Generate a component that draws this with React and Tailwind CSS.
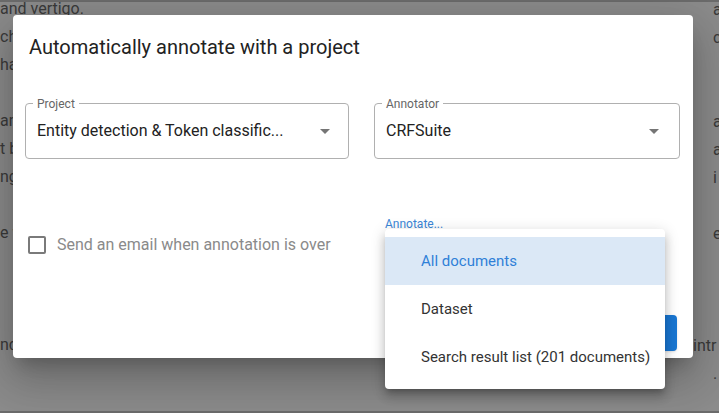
import React from 'react';

const font = { fontFamily: 'Roboto, "Liberation Sans", sans-serif' };

function Caret({ className }) {
    return (
        <svg viewBox="0 0 24 24" className={className} fill="currentColor">
            <path d="M7 10l5 5 5-5z" />
        </svg>
    );
}

function OutlinedSelect({ label, value, width, caretRight }) {
    return (
        <div className={`relative h-[56px] rounded-[4px] border border-[#b0b0b0] ${width}`}>
            <span className="absolute -top-[8px] left-[7px] bg-white px-1 text-[12px] leading-4 text-[#666]">{label}</span>
            <div className="flex h-full items-center pl-[11px] pr-10 text-[16px] text-[#222] whitespace-nowrap overflow-hidden">
                {value}
            </div>
            <Caret className={`absolute top-[15px] h-6 w-6 text-[#757575] ${caretRight}`} />
        </div>
    );
}

export default function App() {
    const leftLines = ['and vertigo.', 'ch', 'ha', '', 'an', 't b', 'ng', '', 'e v', '', '', '', 'nd', ''];
    const rightLines = ['a', 'c', '', '', 'a', 'a', 'i', '', 'e', '', '', '', 'intr', '.'];

    return (
        <div className="relative h-[413px] w-full overflow-hidden bg-[#8b8b8b]" style={font}>
            {/* page behind the modal */}
            <div className="flex h-full justify-between border-t-2 border-b-2 border-[#6b6b6b] text-[16px] text-[#3a3a3a]">
                <div className="-mt-[7px] flex flex-col leading-[28px] whitespace-nowrap">
                    {leftLines.map((l, i) => (
                        <div key={i} className="h-[28px]">{l}</div>
                    ))}
                </div>
                <div className="-mt-[6px] w-[6px] flex flex-col leading-[28px] whitespace-nowrap">
                    {rightLines.map((l, i) => (
                        <div key={i} className={`h-[28px] ${l === 'intr' ? '-ml-[20px]' : ''}`}>{l}</div>
                    ))}
                </div>
            </div>

            {/* dialog */}
            <div className="absolute left-[13px] top-[15px] flex h-[343px] w-[680px] flex-col rounded-[4px] bg-white shadow-[0px_11px_15px_-7px_rgba(0,0,0,0.2),0px_24px_38px_3px_rgba(0,0,0,0.14),0px_9px_46px_8px_rgba(0,0,0,0.12)]">
                <h2 className="px-4 pt-4 text-[20px] leading-8 text-[#222]">Automatically annotate with a project</h2>

                <div className="flex gap-[25px] px-3 pt-10">
                    <OutlinedSelect label="Project" value="Entity detection & Token classific..." width="w-[324px]" caretRight="right-[11px]" />
                    <OutlinedSelect label="Annotator" value="CRFSuite" width="w-[306px]" caretRight="right-[13px]" />
                </div>

                <div className="mt-[58px] flex gap-[25px] px-3">
                    <div className="flex w-[324px] items-end pt-4">
                        <div className="flex items-center gap-2">
                            <div className="flex h-6 w-6 items-center justify-center">
                                <div className="h-[18px] w-[18px] rounded-[2px] border-2 border-[#7a7a7a]" />
                            </div>
                            <span className="text-[16px] text-[#8a8a8a]">Send an email when annotation is over</span>
                        </div>
                    </div>
                    <div className="-mt-[6px] pl-[11px]">
                        <span className="text-[12px] leading-4 text-[#3b86d6]">Annotate...</span>
                    </div>
                </div>

                <div className="mt-auto flex justify-end px-4 pb-[7px]">
                    <button className="h-9 rounded-[4px] bg-[#1976d2] px-4 text-[14px] font-medium tracking-wide text-white shadow">ANNOTATE</button>
                </div>
            </div>

            {/* open menu */}
            <div className="absolute left-[385px] top-[229px] w-[280px] rounded-[4px] bg-white py-2 text-[15px] shadow-[0px_5px_5px_-3px_rgba(0,0,0,0.2),0px_8px_10px_1px_rgba(0,0,0,0.14),0px_3px_14px_2px_rgba(0,0,0,0.12)]">
                <div className="flex h-12 items-center bg-[#dbe8f6] pl-9 text-[#2f80d8]">All documents</div>
                <div className="flex h-12 items-center pl-9 text-[#333]">Dataset</div>
                <div className="flex h-12 items-center pl-9 text-[#333] whitespace-nowrap">Search result list (201 documents)</div>
            </div>
        </div>
    );
}
